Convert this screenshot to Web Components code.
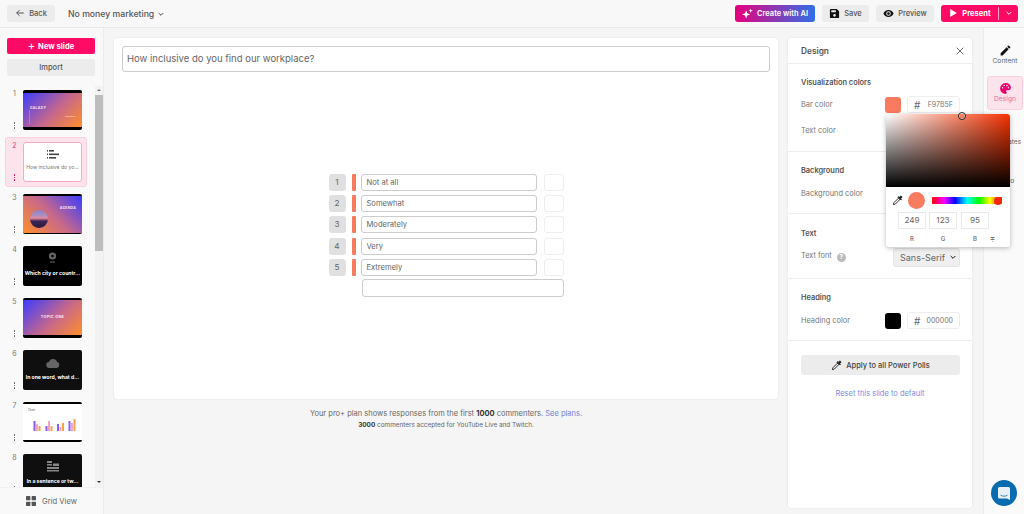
<!DOCTYPE html>
<html lang="en">
<head>
<meta charset="utf-8">
<title>Poll editor</title>
<style>
html,body{margin:0;padding:0;height:514px;overflow:hidden;background:#f5f5f5;font-family:Inter,"Liberation Sans",sans-serif;color:#555}
</style>
</head>
<body>
<poll-app></poll-app>
<script>
function def(name, css, html){
  customElements.define(name, class extends HTMLElement{
    connectedCallback(){
      if(this.shadowRoot) return;
      const r=this.attachShadow({mode:'open'});
      const h=typeof html==='function'?html(this):html;
      r.innerHTML='<style>'+css+'</style>'+h;
    }
  });
}
const I={
 back:'<svg width="10" height="10" viewBox="0 0 24 24" fill="none" stroke="#555" stroke-width="2.4"><path d="M21 12H4M11 5l-7 7 7 7"/></svg>',
 chev:'<svg width="8" height="8" viewBox="0 0 24 24" fill="none" stroke="currentColor" stroke-width="3"><path d="M5 9l7 7 7-7"/></svg>',
 spark:'<svg width="11" height="11" viewBox="0 0 24 24" fill="#fff"><path d="M9 5l2.400 6.600L18 14l-6.600 2.400L9 23l-2.400-6.600L0 14l6.600-2.400zM19 1l1.300 3.700L24 6l-3.700 1.300L19 11l-1.300-3.700L14 6l3.700-1.300z"/></svg>',
 save:'<svg width="11" height="11" viewBox="0 0 24 24" fill="#111"><path d="M17 2H4a2 2 0 0 0-2 2v16a2 2 0 0 0 2 2h16a2 2 0 0 0 2-2V7zM12 19a3 3 0 1 1 0-6 3 3 0 0 1 0 6zM15 9H5V5h10z"/></svg>',
 eye:'<svg width="11" height="11" viewBox="0 0 24 24" fill="#111"><path d="M12 4.500C7 4.500 2.700 7.600 1 12c1.700 4.400 6 7.500 11 7.500s9.300-3.100 11-7.500c-1.700-4.400-6-7.500-11-7.500zm0 12.500a5 5 0 1 1 0-10 5 5 0 0 1 0 10zm0-8a3 3 0 1 0 0 6 3 3 0 0 0 0-6z"/></svg>',
 play:'<svg width="7" height="8" viewBox="0 0 10 12" fill="#fff"><path d="M0 0l10 6-10 6z"/></svg>',
 pencil:'<svg width="13" height="13" viewBox="0 0 24 24" fill="#111"><path d="M3 17.300V21h3.700L17.800 9.900l-3.700-3.700zM20.700 7a1 1 0 0 0 0-1.400l-2.300-2.300a1 1 0 0 0-1.400 0l-1.800 1.800 3.700 3.700z"/></svg>',
 palette:'<svg width="13" height="13" viewBox="0 0 24 24" fill="#e6006e"><path d="M12 2a10 10 0 0 0 0 20c1.400 0 2.300-1 2.300-2.200 0-.6-.2-1-.6-1.500-.3-.4-.6-.8-.6-1.300 0-1 .8-1.700 1.800-1.700h2.100A5 5 0 0 0 22 10.600C22 5.800 17.500 2 12 2zM6.500 12a1.500 1.500 0 1 1 0-3 1.500 1.500 0 0 1 0 3zm3-4a1.500 1.500 0 1 1 0-3 1.500 1.500 0 0 1 0 3zm5 0a1.500 1.500 0 1 1 0-3 1.500 1.500 0 0 1 0 3zm3 4a1.500 1.500 0 1 1 0-3 1.500 1.500 0 0 1 0 3z"/></svg>',
 dropper:(s,c)=>`<svg width="${s}" height="${s}" viewBox="0 0 24 24" fill="none" stroke="${c||'#222'}" stroke-width="2"><path d="M3 21l1-4L14 7l3 3L7 20z"/><path fill="${c||'#222'}" d="M13 5l6 6 1.500-1.500-1.500-1.500 2-2a2 2 0 0 0-3-3l-2 2-1.500-1.500z"/></svg>`,
 grid:'<svg width="10" height="10" viewBox="0 0 11 11" fill="#555"><rect width="4.800" height="4.800" rx=".8"/><rect x="6.200" width="4.800" height="4.800" rx=".8"/><rect y="6.200" width="4.800" height="4.800" rx=".8"/><rect x="6.200" y="6.200" width="4.800" height="4.800" rx=".8"/></svg>',
 close:'<svg width="8" height="8" viewBox="0 0 12 12" stroke="#555" stroke-width="1.300"><path d="M1 1l10 10M11 1L1 11"/></svg>'
};

def('top-button',`:host{display:inline-flex;align-items:center;justify-content:center;gap:4px;height:17px;border-radius:3px;background:#ececec;font:500 7.500px/1 Inter,sans-serif;color:#555;box-sizing:border-box}`,`<slot></slot>`);

def('app-header',`
:host{display:flex;align-items:center;height:28px;flex:none;box-sizing:border-box;background:#f8f8f8;border-bottom:1px solid #e8e8e8;padding:0 6px 1px 7px}
.title{margin:2px 0 0 13px;font:500 8.700px/1 Inter,sans-serif;color:#555;display:flex;align-items:center;gap:3px}
.sp{flex:1}
.tx{padding-top:1px}
.pl{flex:1;display:flex;align-items:center;justify-content:center;gap:5px;padding-left:2px}
.pr{width:20px;height:13px;border-left:1px solid #ffa6c6;display:flex;align-items:center;justify-content:center;box-sizing:border-box}
`,`
<top-button style="width:48px">${I.back}<span class="tx">Back</span></top-button>
<div class="title">No money marketing ${I.chev}</div>
<div class="sp"></div>
<top-button style="width:80px;background:linear-gradient(90deg,#e8007e,#2f6fe8);color:#fff;font-weight:600;margin-right:7px">${I.spark}<span class="tx">Create with AI</span></top-button>
<top-button style="width:47px;margin-right:7px">${I.save}<span class="tx">Save</span></top-button>
<top-button style="width:58px;margin-right:7px">${I.eye}<span class="tx">Preview</span></top-button>
<top-button style="width:77px;background:#ff0a64;color:#fff;font-weight:700;justify-content:flex-start;gap:0">
  <span class="pl">${I.play}<span class="tx">Present</span></span>
  <span class="pr">${I.chev}</span>
</top-button>`);

def('slide-thumb',`
:host{display:block;width:59px;height:40px;border-radius:2px;overflow:hidden;box-sizing:border-box;position:relative;font-family:Inter,sans-serif}
.g{position:absolute;inset:0;display:flex;flex-direction:column;align-items:center;justify-content:flex-start}
.cap{font:700 5.100px/1 Inter,sans-serif;color:#fff;white-space:nowrap}
.t{font:700 3.400px/1 Inter,sans-serif;color:#f6e6f2;letter-spacing:.3px;white-space:nowrap}
`,t=>{
 const k=t.getAttribute('kind');
 if(k==='galaxy')return `<div class="g" style="background:#000;padding:3px 0;box-sizing:border-box"><div style="flex:1;align-self:stretch;background:linear-gradient(135deg,#3b3cff,#c7688a 55%,#ff8f2a);position:relative"><span class="t" style="position:absolute;left:7px;top:13.500px">GALAXY</span><span style="position:absolute;right:7px;top:23px;width:10px;height:.6px;background:#ffc090;opacity:.7"></span><span style="position:absolute;left:6px;top:17px;width:.5px;height:14px;background:#c090d0;opacity:.6"></span></div></div>`;
 if(k==='poll')return `<div class="g" style="background:#fff;border:1px solid #f6a9c4;border-radius:3px;box-sizing:border-box;padding-top:7px"><svg width="12" height="10" viewBox="0 0 12 10" fill="#444" style="margin-bottom:5px"><rect x="0" y="0" width="1" height="1.600"/><rect x="2" y="0" width="5" height="1.600"/><rect x="0" y="3.500" width="1" height="1.600"/><rect x="2" y="3.500" width="10" height="1.600"/><rect x="0" y="7" width="1" height="1.600"/><rect x="2" y="7" width="7" height="1.600"/></svg><span style="font:400 5.100px/1 Inter,sans-serif;color:#777;white-space:nowrap">How inclusive do yo...</span></div>`;
 if(k==='agenda')return `<div class="g" style="background:#000;padding:1.500px 0;box-sizing:border-box"><div style="flex:1;align-self:stretch;background:linear-gradient(45deg,#ff8f2a,#c7688a 50%,#3b3cff);position:relative"><span class="t" style="position:absolute;right:6px;top:11.500px">AGENDA</span><span style="position:absolute;left:7px;top:14px;width:18px;height:18px;border-radius:50%;background:linear-gradient(180deg,#8d83c8 0,#a890c0 30%,#e88aa0 45%,#3c2452 62%,#2a1a40)"></span></div></div>`;
 if(k==='city')return `<div class="g" style="background:#000;padding-top:6px;box-sizing:border-box"><svg width="9" height="11" viewBox="0 0 9 11" fill="#666" style="margin-bottom:8px;flex:none"><circle cx="4.500" cy="4" r="3.600"/><circle cx="4.500" cy="4" r="1.300" fill="#000"/><rect x="2" y="9.500" width="5" height="1"/></svg><span class="cap">Which city or countr...</span></div>`;
 if(k==='topic')return `<div class="g" style="background:#000;padding:1.500px 0 3px;box-sizing:border-box"><div style="flex:1;align-self:stretch;background:linear-gradient(135deg,#3b3cff,#c7688a 55%,#ff8f2a);display:flex;align-items:center;justify-content:center"><span class="t" style="font-size:3.800px">TOPIC ONE</span></div></div>`;
 if(k==='cloud')return `<div class="g" style="background:#0f0f0f;padding-top:8px;box-sizing:border-box"><svg width="14" height="10" viewBox="0 0 14 10" fill="#666" style="margin-bottom:7px;flex:none"><path d="M3.500 10a3 3 0 0 1-.5-6A4.200 4.200 0 0 1 11 3.800 3.200 3.200 0 0 1 10.800 10z"/></svg><span class="cap">In one word, what d...</span></div>`;
 if(k==='chart')return `<div class="g" style="background:#000;padding:1.500px 0 2.500px;box-sizing:border-box"><div style="flex:1;align-self:stretch;background:#fff;position:relative"><span style="position:absolute;left:5px;top:5px;font:400 2.800px/1 Inter,sans-serif;color:#555">Chart</span><svg width="59" height="36" viewBox="0 0 59 36" style="position:absolute;left:0;top:0">
<g fill="#8a5cf0"><rect x="10.500" y="17" width="2" height="10"/><rect x="22.500" y="22" width="2" height="5"/><rect x="34" y="20" width="2" height="7"/><rect x="45.500" y="17" width="2" height="10"/></g>
<g fill="#f2a3c8"><rect x="13" y="20" width="2" height="7"/><rect x="25" y="17" width="2" height="10"/><rect x="36.500" y="23" width="2" height="4"/><rect x="48" y="19" width="2" height="8"/></g>
<g fill="#f6a24a"><rect x="15.500" y="22" width="2" height="5"/><rect x="27.500" y="22" width="2" height="5"/><rect x="39" y="19" width="2" height="8"/><rect x="50.500" y="15" width="2" height="12"/></g></svg></div></div>`;
 if(k==='sentence')return `<div class="g" style="background:#0f0f0f;padding-top:7px;box-sizing:border-box"><svg width="12" height="11" viewBox="0 0 12 11" fill="#888" style="margin-bottom:7px;flex:none"><rect x="0" y="0" width="5" height="2"/><rect x="6" y="2.500" width="6" height="2.500"/><rect y="3" width="5" height="1.500"/><rect y="6" width="12" height="2"/><rect y="9" width="12" height="1.500"/></svg><span class="cap">In a sentence or tw...</span></div>`;
 return '';
});

def('slide-item',`
:host{display:block;height:52px;box-sizing:border-box;flex:none}
.box{display:flex;height:50px;margin:-1px 0 0 5px;width:82px;box-sizing:border-box;padding-top:4px;border:1px solid transparent;border-radius:3px}
:host([active]) .box{background:#fde4ec;border-color:#fbd0de}
.side{width:17px;display:flex;flex-direction:column;align-items:center;justify-content:space-between;padding:0 0 1px;box-sizing:border-box;height:40px;font:400 7px/1 Inter,sans-serif;color:#777}
:host([active]) .side{color:#e6336f}
.dots{display:flex;flex-direction:column;gap:1px}
.dots i{width:1.600px;height:1.600px;background:#555;display:block;border-radius:50%}
:host([active]) .dots i{background:#e6005f}
`,t=>`<div class="box"><div class="side"><span>${t.getAttribute('n')}</span><span class="dots"><i></i><i></i><i></i></span></div><slot></slot></div>`);

def('app-sidebar',`
:host{display:flex;flex-direction:column;width:104px;flex:none;box-sizing:border-box;background:#f9f9f9;border-right:1px solid #ececec;height:486px}
.btns{padding:10px 8px 0 7px;display:flex;flex-direction:column;gap:5px;flex:none}
.new{height:16px;background:#ff0a64;color:#fff;border-radius:2px;font:700 7.600px/16px Inter,sans-serif;text-align:center}
.new b{font-size:11px;font-weight:500;vertical-align:-1px;margin-right:3px}
.imp{height:17px;background:#ececec;color:#555;border-radius:2px;font:500 7.500px/17px Inter,sans-serif;text-align:center}
.mid{flex:1;display:flex;min-height:0;margin-top:10px;overflow:hidden}
.list{flex:1;overflow:hidden;display:flex;flex-direction:column}
.bar{width:8px;flex:none;background:#f2f2f2;display:flex;flex-direction:column;align-items:center;box-sizing:border-box}
.up,.dn{width:0;height:0;border-left:2px solid transparent;border-right:2px solid transparent;flex:none}
.up{border-bottom:2.500px solid #777;margin-top:3px;margin-bottom:3.500px}
.th{width:8px;height:156px;background:#bdbdbd;flex:none}
.dn{border-top:2.500px solid #333;margin-top:auto;margin-bottom:4px}
.grid{height:26px;flex:none;display:flex;align-items:center;justify-content:center;gap:6px;font:400 7.600px/1 Inter,sans-serif;color:#666;background:#f9f9f9;border-top:1px solid #f1f1f1}
.grid span{padding-top:1px}
`,()=>{
 const s=[['galaxy'],['poll',1],['agenda'],['city'],['topic'],['cloud'],['chart'],['sentence']];
 return `<div class="btns"><div class="new"><b>+</b>New slide</div><div class="imp">Import</div></div>
 <div class="mid"><div class="list">${s.map((a,i)=>`<slide-item n="${i+1}"${a[1]?' active':''}><slide-thumb kind="${a[0]}"></slide-thumb></slide-item>`).join('')}</div>
 <div class="bar"><span class="up"></span><span class="th"></span><span class="dn"></span></div></div>
 <div class="grid">${I.grid}<span>Grid View</span></div>`;
});

def('poll-row',`
:host{display:flex;align-items:center;height:17px;flex:none}
.n{width:17px;height:17px;border-radius:3px;background:#e0e0e0;color:#666;font:400 8.200px/17px Inter,sans-serif;text-align:center;margin-right:6px}
.b{width:4px;height:17px;border-radius:1px;background:#f97b5f;margin-right:5px}
.i{width:176px;height:17px;box-sizing:border-box;border:1px solid #ccc;border-radius:3px;background:#fff;font:400 7.600px/15px Inter,sans-serif;color:#666;padding-left:5px;margin-right:7px}
.c{width:20px;height:17px;box-sizing:border-box;border:1px solid #eee;border-radius:3px;background:#fff}
`,t=>`<span class="n">${t.getAttribute('n')}</span><span class="b"></span><span class="i"><slot></slot></span><span class="c"></span>`);

def('poll-canvas',`
:host{display:flex;flex-direction:column;width:664px;height:361px;flex:none;box-sizing:border-box;background:#fff;border-radius:3px;box-shadow:0 0 2px rgba(0,0,0,.1);padding:8px 8px 0}
.q{height:26px;flex:none;box-sizing:border-box;border:1px solid #ccc;border-radius:3px;font:400 9.500px/24px Inter,sans-serif;color:#666;padding-left:4px}
.stage{flex:1;display:flex;align-items:center;justify-content:center}
.rows{display:flex;flex-direction:column;gap:4.400px}
.last{height:18px;width:202px;box-sizing:border-box;border:1px solid #ccc;border-radius:3px;margin:-1px 0 0 33px;background:#fff}
`,`<div class="q">How inclusive do you find our workplace?</div>
<div class="stage"><div class="rows">
<poll-row n="1">Not at all</poll-row><poll-row n="2">Somewhat</poll-row><poll-row n="3">Moderately</poll-row><poll-row n="4">Very</poll-row><poll-row n="5">Extremely</poll-row>
<div class="last"></div></div></div>`);

def('plan-note',`
:host{display:block;text-align:center;margin-top:9px;font-family:Inter,sans-serif;color:#666;width:664px}
.a{font-size:7.500px;line-height:11px}
.b{font-size:6.400px;line-height:10px;margin-top:1px}
b{color:#333;font-weight:700}
span{color:#6f7fd8}
`,`<div class="a">Your pro+ plan shows responses from the first <b>1000</b> commenters. <span>See plans.</span></div><div class="b"><b>3000</b> commenters accepted for YouTube Live and Twitch.</div>`);

def('color-field',`
:host{display:flex;align-items:center;height:17px;font:400 7px/1 Inter,sans-serif;color:#666}
.s{width:16px;height:16px;border-radius:3px;margin-right:6px;background:var(--c)}
.h{width:53px;height:17px;box-sizing:border-box;border:1px solid #eee;border-radius:3px;background:#fff;display:flex;align-items:center;padding:0 6px 0 6px;justify-content:space-between;color:#777}
.p{font-size:10px;color:#666}
`,t=>`<span class="s" style="--c:${t.getAttribute('c')}"></span><span class="h"><span class="p">#</span><span>${t.getAttribute('v')}</span></span>`);

def('design-section',`
:host{display:block;box-sizing:border-box;border-bottom:1px solid #eee;padding:0 12px 0 13px}
.t{font:600 7.400px/1 Inter,sans-serif;color:#555}
`,t=>`<div class="t">${t.getAttribute('heading')}</div><slot></slot>`);

def('field-row',`
:host{display:flex;align-items:center;justify-content:space-between;font:400 7.400px/1 Inter,sans-serif;color:#777;height:17px}
`,`<slot></slot><slot name="end"></slot>`);

def('design-panel',`
:host{display:flex;flex-direction:column;width:184px;height:470px;flex:none;box-sizing:border-box;background:#fff;border-radius:3px;box-shadow:0 0 2px rgba(0,0,0,.1)}
.hd{height:26px;flex:none;box-sizing:border-box;display:flex;align-items:center;justify-content:space-between;padding:1px 8px 0 13px;border-bottom:1px solid #eee;font:600 8.300px/1 Inter,sans-serif;color:#555}
.sec1{height:88px;padding-top:15px}
.sec2{height:62px;padding-top:15px}
.sec3{height:65px;padding-top:16px}
.sec4{height:62px;padding-top:15px}
.sel{width:67px;height:19px;box-sizing:border-box;background:#efefef;border:1px solid #e4e4e4;border-radius:3px;font:400 9px/1 Inter,sans-serif;color:#666;display:flex;align-items:center;justify-content:space-between;padding:0 2px 0 6px}
.sel svg{color:#111}
.help{display:inline-block;width:9px;height:9px;border-radius:50%;background:#bbb;color:#fff;font:700 6.500px/9px Inter,sans-serif;text-align:center;margin-left:5px;vertical-align:-1px}
.apply{margin:14px 12px 0 13px;height:20px;background:#ececec;border-radius:3px;display:flex;align-items:center;justify-content:center;gap:4px;font:500 7.500px/1 Inter,sans-serif;color:#444}
.apply span{padding-top:1px}
.reset{margin-top:14px;text-align:center;font:400 7.500px/10px Inter,sans-serif;color:#7d8ce0}
`,`<div class="hd"><span>Design</span>${I.close}</div>
<design-section class="sec1" heading="Visualization colors">
 <field-row style="margin-top:10px">Bar color<color-field slot="end" c="#f97b5f" v="F97B5F"></color-field></field-row>
 <field-row style="margin-top:8.600px">Text color</field-row>
</design-section>
<design-section class="sec2" heading="Background"><field-row style="margin-top:11px">Background color</field-row></design-section>
<design-section class="sec3" heading="Text"><field-row style="margin-top:11.500px"><span>Text font<span class="help">?</span></span><span slot="end" class="sel">Sans-Serif ${I.chev}</span></field-row></design-section>
<design-section class="sec4" heading="Heading"><field-row style="margin-top:11px">Heading color<color-field slot="end" c="#000" v="000000"></color-field></field-row></design-section>
<div class="apply">${I.dropper(11)}<span>Apply to all Power Polls</span></div>
<div class="reset">Reset this slide to default</div>`);

def('color-picker',`
:host{display:flex;flex-direction:column;position:absolute;left:886px;top:114px;width:124px;height:133px;background:#fff;border-radius:3px;box-shadow:0 1px 5px rgba(0,0,0,.28);z-index:5}
.sv{height:73px;flex:none;border-radius:3px 3px 0 0;position:relative;background:linear-gradient(to top,#000,rgba(0,0,0,0)),linear-gradient(to right,#fff,#f53100)}
.knob{position:absolute;left:72px;top:-2.500px;width:6px;height:6px;border:1px solid #222;border-radius:50%;box-shadow:0 0 0 .500px #fff inset}
.mid{display:flex;align-items:center;height:26px;margin-top:.500px;padding-left:6px;flex:none}
.dr{width:11px;height:11px;display:flex}
.sw{width:17px;height:17px;border-radius:50%;background:#f97b5f;margin-left:5px}
.hue{position:relative;width:70px;height:7px;margin-left:7px;border-radius:1px;background:linear-gradient(to right,#f00 0%,#f0f 17%,#00f 33%,#0ff 50%,#0f0 67%,#ff0 83%,#f00 100%)}
.hk{position:absolute;right:0;top:-.500px;width:8px;height:8px;border-radius:50%;background:#ee2a0a}
.ins{display:flex;gap:3px;padding-left:12px;margin-top:-1.500px;flex:none}
.ins span{width:28px;height:17px;box-sizing:border-box;border:1px solid #eaeaea;font:400 8.200px/15px Inter,sans-serif;color:#666;text-align:center}
.ins span:nth-child(2){margin-right:1px}
.lb{display:flex;padding-left:12px;margin-top:5.500px;font:500 6px/8px Inter,sans-serif;color:#666;gap:3px}
.lb span{width:28px;text-align:center}
.lb span:nth-child(2){margin-right:1px}
.lb i{font-style:normal;font-size:5.500px;margin-left:-2px;color:#777}
`,`<div class="sv"><span class="knob"></span></div>
<div class="mid"><span class="dr">${I.dropper(11)}</span><span class="sw"></span><span class="hue"><span class="hk"></span></span></div>
<div class="ins"><span>249</span><span>123</span><span>95</span></div>
<div class="lb"><span>R</span><span>G</span><span>B</span><i>≑</i></div>`);

def('rail-item',`
:host{display:flex;flex-direction:column;align-items:center;justify-content:flex-start;gap:1px;width:36px;height:34px;box-sizing:border-box;padding-top:6px;border-radius:3px;font:400 6.700px/1 Inter,sans-serif;color:#666;flex:none}
:host([active]){background:#fde4ec;border:1px solid #fbd0de;color:#ef6a9b;padding-top:5px}
`,`<slot></slot>`);

def('side-rail',`
:host{display:flex;flex-direction:column;align-items:flex-start;gap:4px;width:41px;flex:none;box-sizing:border-box;background:#fafafa;border-left:1px solid #ececec;padding:10px 0 0 3px;height:486px}
`,`<rail-item>${I.pencil}<span>Content</span></rail-item>
<rail-item active>${I.palette}<span>Design</span></rail-item>
<rail-item style="margin-top:5px"><svg width="13" height="13"></svg><span>Templates</span></rail-item>
<rail-item style="margin-top:1px"><svg width="13" height="13"></svg><span>Audio</span></rail-item>`);

def('chat-bubble',`
:host{display:flex;align-items:center;justify-content:center;position:absolute;left:990.500px;top:480px;width:26px;height:26px;border-radius:50%;background:#0a6cb0;z-index:6}
`,`<svg width="14" height="15" viewBox="0 0 14 15"><path d="M2.500 1h9A1.500 1.500 0 0 1 13 2.500v11.500l-3-1.500H2.500A1.500 1.500 0 0 1 1 11V2.500A1.500 1.500 0 0 1 2.500 1z" fill="#e8f0f6"/><path d="M3.500 9.200c2 1.300 5 1.300 7 0" stroke="#0a6cb0" fill="none" stroke-width=".8"/></svg>`);

def('poll-app',`
:host{display:flex;flex-direction:column;width:1024px;height:514px;position:relative;overflow:hidden;background:#f5f5f5}
.body{display:flex;flex:1;min-height:0}
.center{flex:none;width:684px;padding:10px 0 0 10px;box-sizing:border-box}
.right{flex:none;width:195px;padding-top:10px;box-sizing:border-box}
`,`<app-header></app-header>
<div class="body">
 <app-sidebar></app-sidebar>
 <div class="center"><poll-canvas></poll-canvas><plan-note></plan-note></div>
 <div class="right"><design-panel></design-panel></div>
 <side-rail></side-rail>
</div>
<color-picker></color-picker>
<chat-bubble></chat-bubble>`);
</script>
</body>
</html>
